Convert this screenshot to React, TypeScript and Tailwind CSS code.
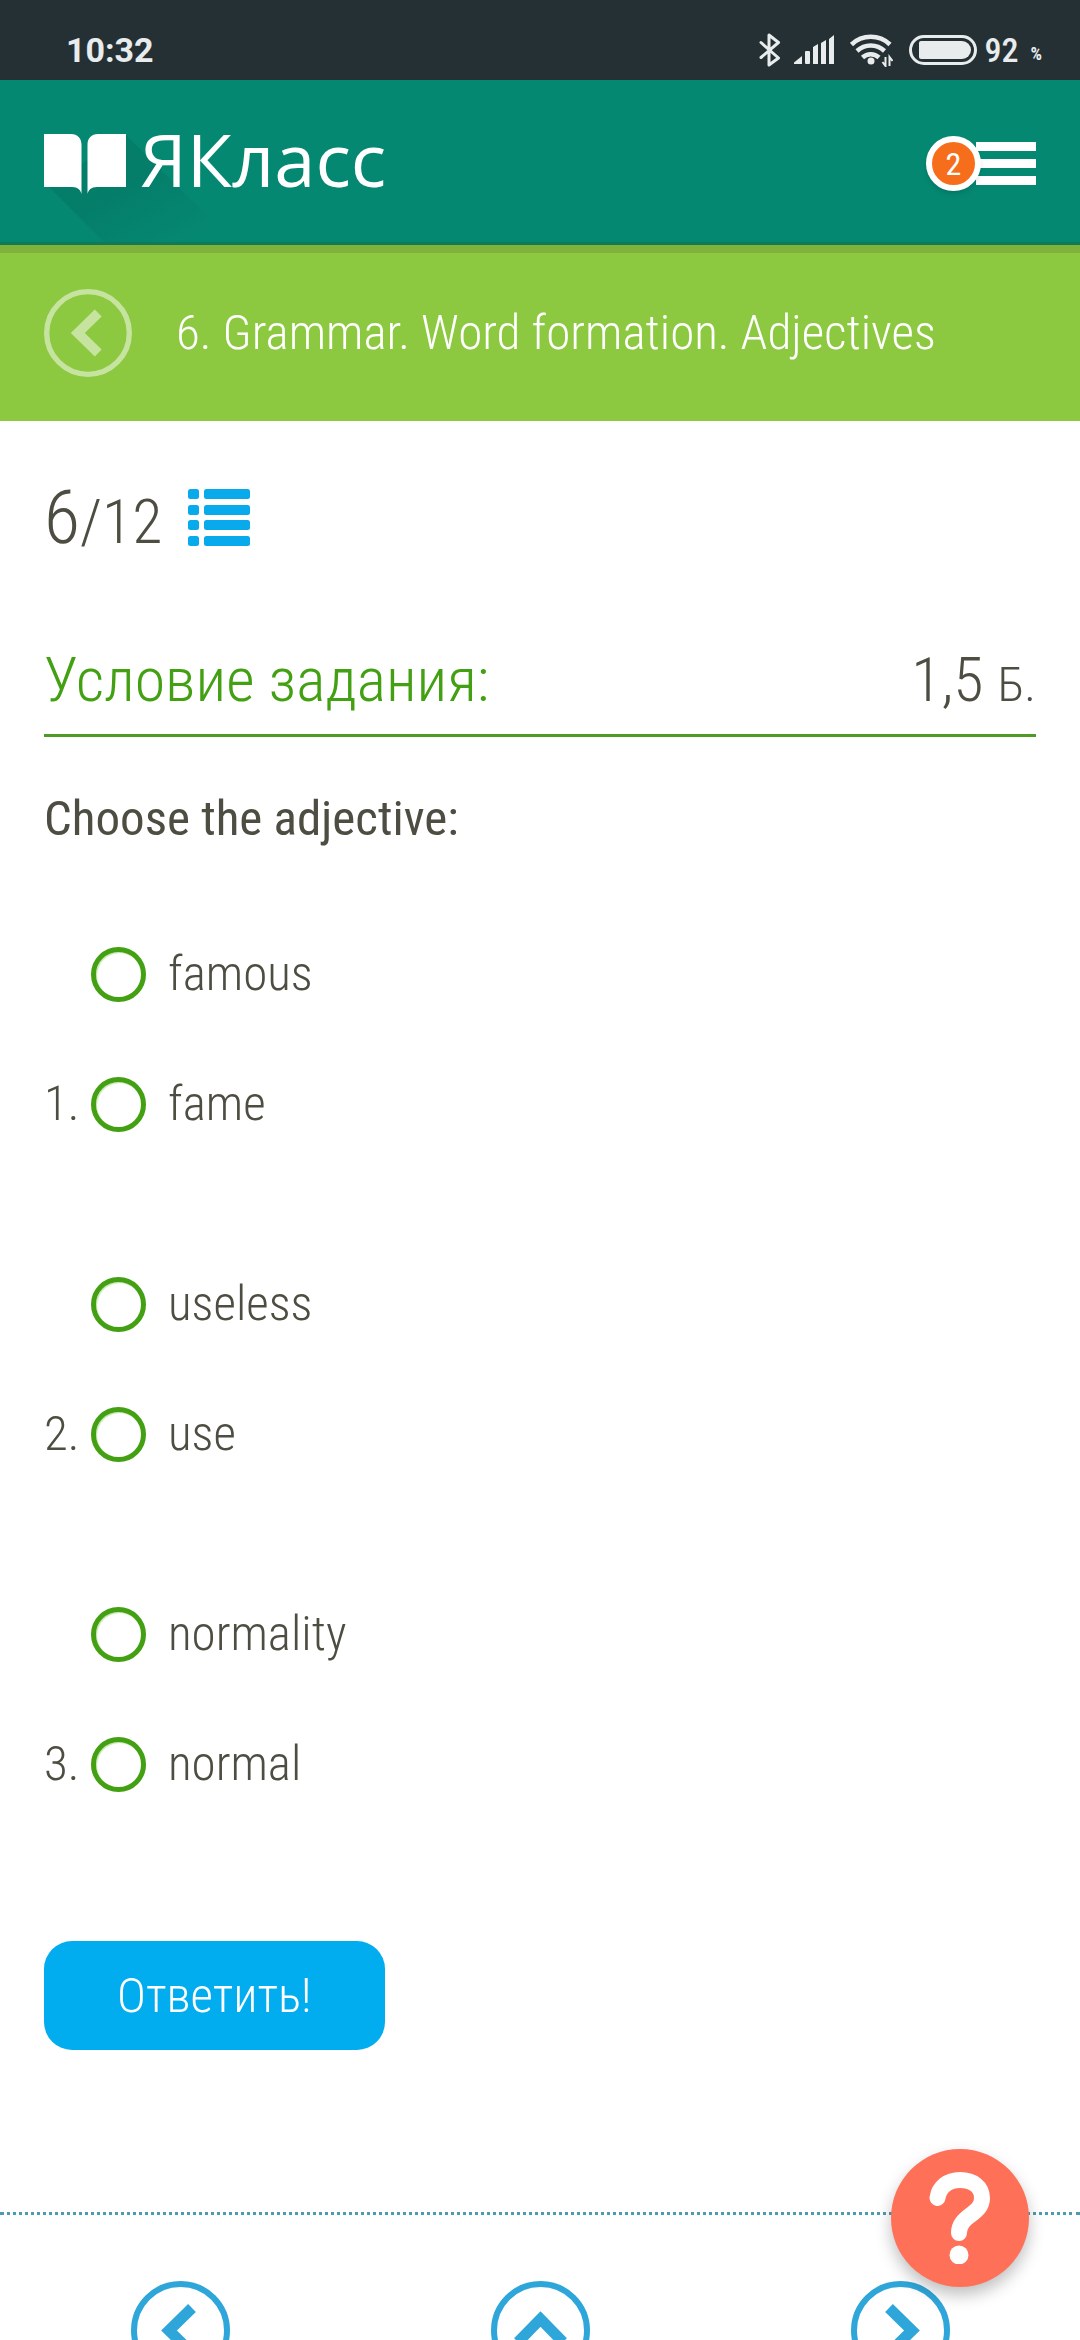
import { useState } from 'react'

const questions = [
  { id: 'q1', options: ['famous', 'fame'] },
  { id: 'q2', options: ['useless', 'use'] },
  { id: 'q3', options: ['normality', 'normal'] },
]

function StatusBar() {
  return (
    <div className="h-20 bg-[#253035] text-[#e8ecec] flex items-center justify-between pt-5 pl-[66px] pr-[38px]">
      <span className="font-['Roboto',sans-serif] font-bold text-[34px] leading-10">10:32</span>
      <div className="flex items-center">
        <svg width="22" height="34" viewBox="0 0 22 34" fill="none" stroke="currentColor" strokeWidth="3" strokeLinejoin="round" strokeLinecap="round">
          <path d="M2 9.5 19.500 25 10 32V2l9.500 7.500L2 24.500" />
        </svg>
        <svg className="ml-[13px]" width="40" height="30" viewBox="0 0 40 30" fill="currentColor">
          <path d="M0 29V27.500L8 21V29Z" />
          <rect x="11" y="16" width="5" height="13" rx="1" />
          <path d="M19 29V12l5-3V29ZM27 29V8l5-3V29ZM35 29V4l5-4V29Z" />
        </svg>
        <svg className="ml-4" width="43" height="34" viewBox="0 0 43 34" fill="none" stroke="currentColor" strokeWidth="4.500">
          <path d="M1.500 11.500a28 28 0 0 1 38.500 0M7 18a20 20 0 0 1 27.500 0M12.500 24.500a12 12 0 0 1 16.500 0" />
          <circle cx="21" cy="28" r="3.500" fill="currentColor" stroke="none" />
          <path d="M35.500 24v9l-3-4M39.500 33v-9l3 4" strokeWidth="2" />
        </svg>
        <svg className="ml-4" width="68" height="30" viewBox="0 0 68 30">
          <rect x="1.500" y="1.500" width="65" height="27" rx="13.500" fill="none" stroke="currentColor" strokeWidth="3" />
          <path d="M12 6H53a9 9 0 0 1 0 18H12a2 2 0 0 1-2-2V8a2 2 0 0 1 2-2Z" fill="currentColor" />
        </svg>
        <span className="ml-2 text-[34px] leading-10 font-medium">92</span>
        <span className="ml-3 pt-2 text-lg font-bold">%</span>
      </div>
    </div>
  )
}

function Logo() {
  return (
    <a href="#home" className="flex items-start gap-[14px]">
      <svg className="overflow-visible" width="82" height="60" viewBox="0 0 82 60" fill="white">
        <defs>
          <linearGradient id="fall" x1="0" y1="0" x2="1" y2="1">
            <stop offset="0.400" stopColor="#047d69" />
            <stop offset="0.850" stopColor="#058872" />
          </linearGradient>
        </defs>
        <path d="M4 52 64 112H194L82 1Z" fill="url(#fall)" />
        <path d="M0 0H27C33.500 0 37.500 4 37.500 11V60C36.500 56 34 53 28 53H0Z" />
        <path d="M82 0H54C47.500 0 43.500 4 43.500 11V60C44.500 56 47 53 53 53H82Z" />
      </svg>
      <span className="font-['Open_Sans',sans-serif] font-normal text-[74px] leading-[50px] text-white">ЯКласс</span>
    </a>
  )
}

function CircleArrow({ dir, size }: { dir: 'left' | 'up' | 'right'; size: number }) {
  const turn = { left: 0, up: 90, right: 180 }[dir]
  return (
    <svg width={size} height={size} viewBox="0 0 99 99" fill="none" stroke="currentColor">
      <circle cx="49.500" cy="49.500" r="46.500" strokeWidth="6" />
      <path d="M61 27 38 49.500 61 72" strokeWidth="11" transform={`rotate(${turn} 49.500 49.500)`} />
    </svg>
  )
}

export default function App() {
  const [answers, setAnswers] = useState<Record<string, string>>({})

  return (
    <div className="h-screen overflow-hidden bg-white font-['Roboto_Condensed','Roboto',sans-serif] font-light text-[#4d4d42]">
      <StatusBar />

      <header className="h-[165px] bg-[#058872] border-b-3 border-[#107a56] overflow-hidden px-11 pt-[5px] flex items-center justify-between">
        <Logo />
        <button aria-label="Меню" className="flex items-center">
          <span className="relative -mr-[5px] w-[55px] h-[55px] rounded-full border-6 border-white bg-[#f66e1c] shadow-md grid place-items-center text-[32px] leading-none text-white font-normal">
            2
          </span>
          <span className="flex flex-col gap-2 w-[60px]">
            <span className="h-[9px] bg-white" />
            <span className="h-[9px] bg-white" />
            <span className="h-[9px] bg-white" />
          </span>
        </button>
      </header>

      <div className="h-[176px] bg-[#8cc940] border-t-8 border-[#80b23b] px-11 pb-2 flex items-center gap-11">
        <a href="#topic" aria-label="Назад" className="text-white/50">
          <CircleArrow dir="left" size={88} />
        </a>
        <h1 className="text-[49px] leading-[60px] text-white whitespace-nowrap">6. Grammar. Word formation. Adjectives</h1>
      </div>

      <main className="px-11 pt-14">
        <div className="h-20 flex items-center gap-[26px]">
          <p className="pt-2 text-[62px] leading-[80px]">
            <span className="text-[74px] leading-none">6</span>/12
          </p>
          <button aria-label="Список заданий">
            <svg width="62" height="57" viewBox="0 0 62 57" fill="#08aaeb">
              {[0, 16, 31, 47].map(y => (
                <g key={y}>
                  <rect y={y} width="11" height="10" rx="2.500" />
                  <rect x="16" y={y} width="46" height="10" rx="2.500" />
                </g>
              ))}
            </svg>
          </button>
        </div>

        <div className="mt-[87px] pb-[18px] border-b-3 border-[#4f9a26] flex items-baseline justify-between text-[62px] leading-[72px]">
          <h2 className="text-[#43a012]">Условие задания:</h2>
          <p>
            1,5 <span className="text-[49px] leading-none">Б.</span>
          </p>
        </div>

        <p className="mt-[52px] text-[49px] leading-[60px] font-normal">Choose the adjective:</p>

        <form className="mt-[60px]" onSubmit={e => e.preventDefault()}>
          <ol className="space-y-[70px] text-[49px] leading-[60px]">
            {questions.map((q, i) => (
              <li key={q.id} className="flex items-end">
                <span className="w-[47px] h-[130px] flex items-center">{i + 1}.</span>
                <div>
                  {q.options.map(option => (
                    <label key={option} className="h-[130px] flex items-center gap-[22px]">
                      <input
                        type="radio"
                        name={q.id}
                        value={option}
                        checked={answers[q.id] === option}
                        onChange={() => setAnswers({ ...answers, [q.id]: option })}
                        className="appearance-none w-[55px] h-[55px] rounded-full border-[5px] border-[#43a012] bg-white shadow-[inset_1px_1px_1px_#bfe8a8] checked:bg-[#43a012]"
                      />
                      {option}
                    </label>
                  ))}
                </div>
              </li>
            ))}
          </ol>
          <button type="submit" className="mt-[112px] h-[109px] px-[73px] rounded-[28px] bg-[#02adef] text-white text-[49px] leading-[60px]">
            Ответить!
          </button>
        </form>
      </main>

      <nav className="mt-[162px] border-t-3 border-dotted border-[#4c9bb3] pt-[66px] grid grid-cols-3 justify-items-center text-[#2fa6da]">
        <a href="#prev" aria-label="Предыдущее задание"><CircleArrow dir="left" size={99} /></a>
        <a href="#up" aria-label="Наверх"><CircleArrow dir="up" size={99} /></a>
        <a href="#next" aria-label="Следующее задание"><CircleArrow dir="right" size={99} /></a>
      </nav>

      <button aria-label="Помощь" className="fixed right-[51px] bottom-[53px] w-[138px] h-[138px] rounded-full bg-[#ff7058] shadow-[0_8px_16px_rgba(0,0,0,0.25)] grid place-items-center">
        <svg width="62" height="92" viewBox="0 0 62 92" fill="none">
          <path d="M8.500 26C10 15 19 8 31 8C44 8 53 15 53 26C53 43 30 43 30 61" stroke="white" strokeWidth="16" strokeLinecap="round" />
          <circle cx="30" cy="83" r="9.500" fill="white" />
        </svg>
      </button>
    </div>
  )
}
